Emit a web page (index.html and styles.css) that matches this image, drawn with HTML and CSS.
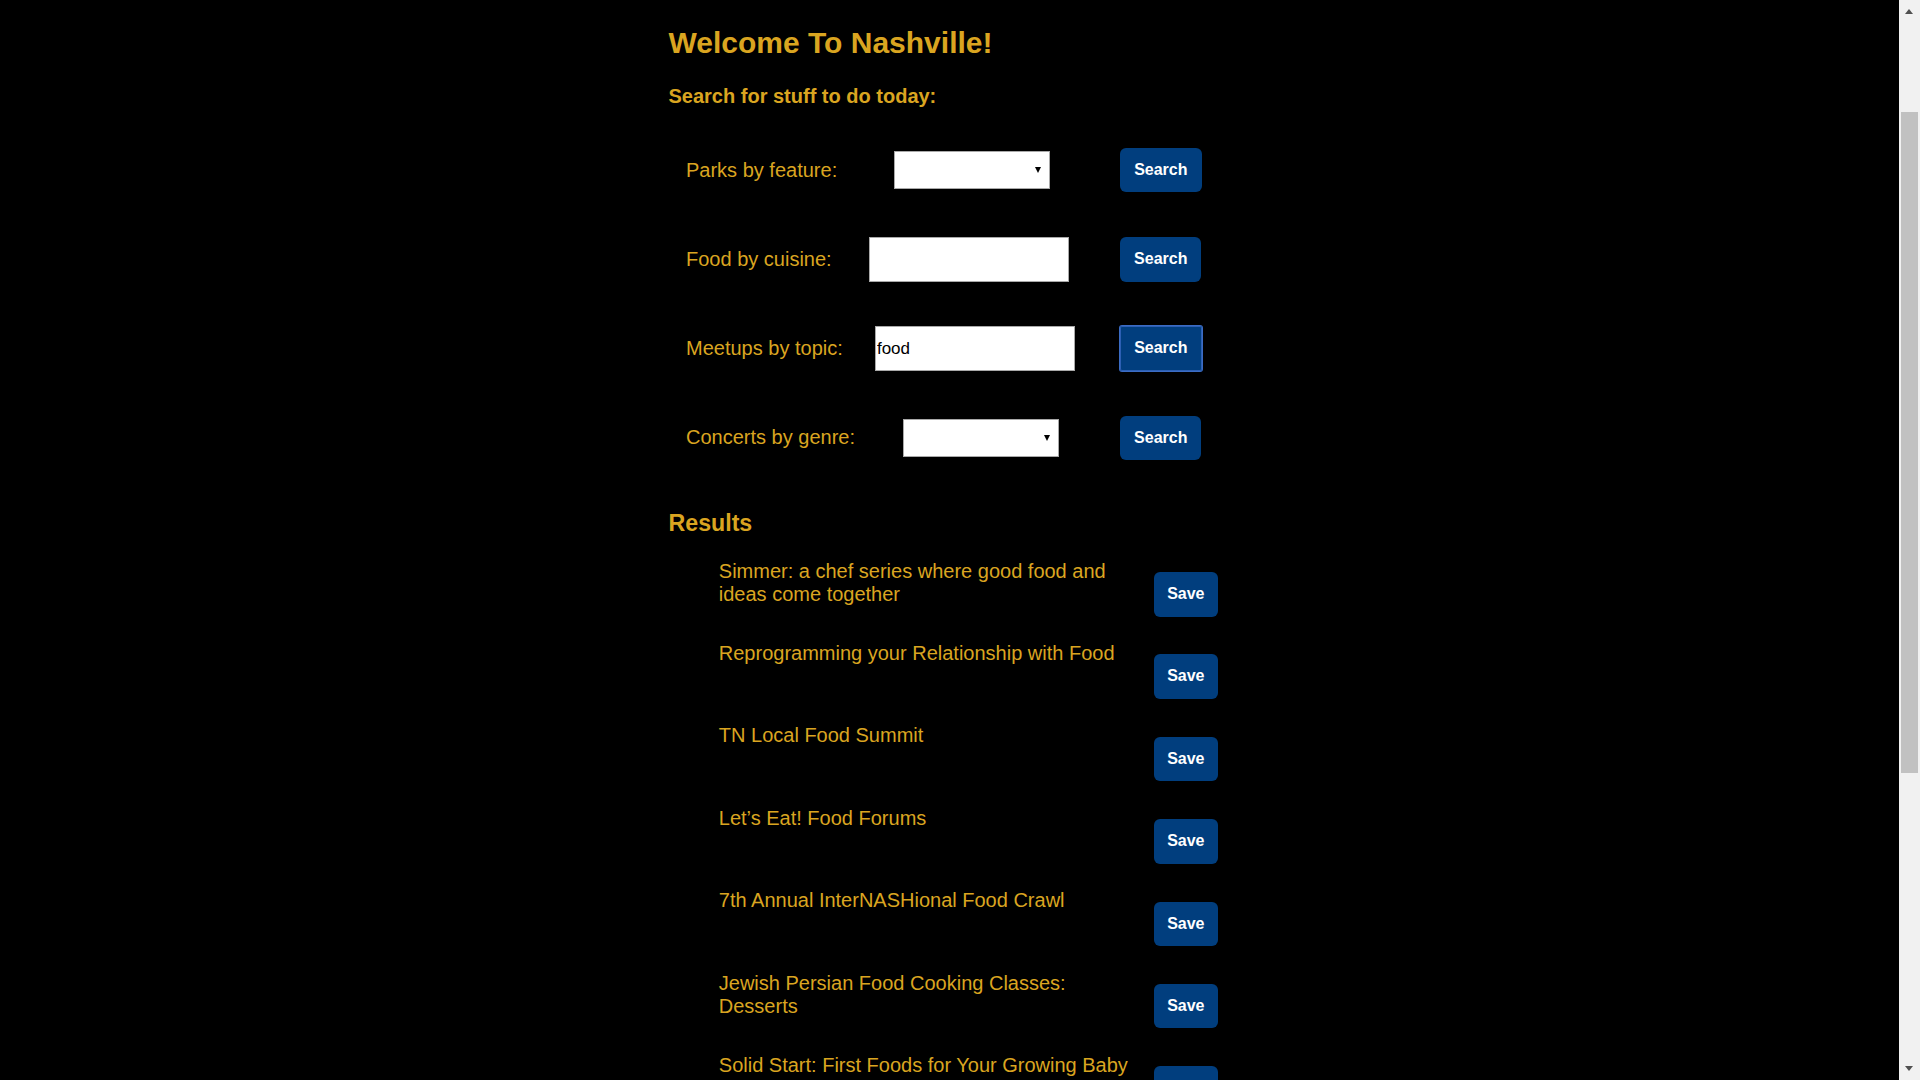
FILE: index.html
```html
<!DOCTYPE html>
<html lang="en">
<head>
<meta charset="utf-8">
<title>Welcome To Nashville!</title>
<link rel="stylesheet" href="styles.css">
</head>
<body>
<main class="page">
  <h1 class="title">Welcome To Nashville!</h1>
  <h3 class="subtitle">Search for stuff to do today:</h3>

  <form class="search-row">
    <label class="search-label">Parks by feature:</label>
    <div class="select-wrap control"><select class="select"></select></div>
    <button type="button" class="btn">Search</button>
  </form>

  <form class="search-row">
    <label class="search-label">Food by cuisine:</label>
    <input class="text-input control" type="text" value="">
    <button type="button" class="btn">Search</button>
  </form>

  <form class="search-row">
    <label class="search-label">Meetups by topic:</label>
    <input class="text-input control" type="text" value="food">
    <button type="button" class="btn is-focused">Search</button>
  </form>

  <form class="search-row">
    <label class="search-label">Concerts by genre:</label>
    <div class="select-wrap control"><select class="select"></select></div>
    <button type="button" class="btn">Search</button>
  </form>

  <h2 class="results-title">Results</h2>
  <ul class="results">
    <li class="result"><span class="result-name">Simmer: a chef series where good food and ideas come together</span><button type="button" class="btn btn-save">Save</button></li>
    <li class="result"><span class="result-name">Reprogramming your Relationship with Food</span><button type="button" class="btn btn-save">Save</button></li>
    <li class="result"><span class="result-name">TN Local Food Summit</span><button type="button" class="btn btn-save">Save</button></li>
    <li class="result"><span class="result-name">Let’s Eat! Food Forums</span><button type="button" class="btn btn-save">Save</button></li>
    <li class="result"><span class="result-name">7th Annual InterNASHional Food Crawl</span><button type="button" class="btn btn-save">Save</button></li>
    <li class="result"><span class="result-name">Jewish Persian Food Cooking Classes: Desserts</span><button type="button" class="btn btn-save">Save</button></li>
    <li class="result"><span class="result-name">Solid Start: First Foods for Your Growing Baby</span><button type="button" class="btn btn-save">Save</button></li>
  </ul>
</main>

<div class="scrollbar" aria-hidden="true">
  <span class="scroll-arrow scroll-arrow-up"></span>
  <span class="scroll-thumb"></span>
  <span class="scroll-arrow scroll-arrow-down"></span>
</div>
</body>
</html>
```
FILE: styles.css
```css
html {
  background: #000;
  overflow: hidden;
}
body {
  margin: 0 21px 0 0;
  background: #000;
  color: #daa520;
  font-family: "Liberation Sans", Arial, sans-serif;
}

.page {
  box-sizing: border-box;
  width: 562px;
  margin: 0 auto;
  padding-top: 26.2px;
}

.title {
  margin: 0;
  font-size: 30px;
  line-height: 34px;
  font-weight: bold;
}

.subtitle {
  margin: 24.9px 0 0;
  font-size: 20px;
  line-height: 23px;
  font-weight: bold;
}

.search-row {
  display: flex;
  align-items: center;
  justify-content: space-between;
  width: 515.5px;
  height: 44.5px;
  margin: 0 0 44.8px 17.5px;
}
.subtitle + .search-row {
  margin-top: 39.7px;
}

.search-label {
  font-size: 20px;
  line-height: 23px;
}

.control {
  margin-right: 13px;
}

.select-wrap {
  position: relative;
  width: 156px;
  height: 37.5px;
}
.select-wrap::after {
  content: "";
  position: absolute;
  right: 9px;
  top: 16px;
  border-left: 3.5px solid transparent;
  border-right: 3.5px solid transparent;
  border-top: 6px solid #000;
  pointer-events: none;
}
.select {
  -webkit-appearance: none;
  appearance: none;
  box-sizing: border-box;
  display: block;
  width: 100%;
  height: 100%;
  margin: 0;
  border: 1px solid #a9a9a9;
  border-radius: 0;
  background: #fff;
  font-family: "Liberation Sans", Arial, sans-serif;
  font-size: 16px;
}

.text-input {
  box-sizing: border-box;
  width: 200px;
  height: 44.5px;
  margin-top: 0;
  margin-bottom: 0;
  margin-left: 0;
  padding: 0 2px 0 1px;
  border: 1px solid #a9a9a9;
  border-radius: 0;
  background: #fff;
  color: #000;
  font-family: "Liberation Sans", Arial, sans-serif;
  font-size: 17px;
}

.btn {
  margin: 0;
  padding: 13px 14px;
  border: none;
  border-radius: 6px;
  background: #013e7e;
  color: #fff;
  font-family: "Liberation Sans", Arial, sans-serif;
  font-size: 16px;
  line-height: 18.5px;
  font-weight: bold;
  cursor: pointer;
}
.btn.is-focused {
  border-radius: 2px;
  box-shadow: 0 0 0 1px #3b6cc4, inset 0 0 0 1px #2d5fb3;
}

.results-title {
  margin: 49.8px 0 0;
  font-size: 23.2px;
  line-height: 27px;
  font-weight: bold;
}

.results {
  list-style: none;
  width: 498.9px;
  margin: 22.7px 0 0;
  padding: 0 0 0 50.3px;
}

.result {
  display: flex;
  justify-content: space-between;
  align-items: flex-start;
  margin-bottom: 25.5px;
}

.result-name {
  width: 420px;
  font-size: 20px;
  line-height: 23px;
}

.btn-save {
  margin-top: 12.4px;
  padding: 13px 13.2px;
}

/* window scrollbar (page is scrolled part-way down) */
.scrollbar {
  position: fixed;
  top: 0;
  right: 0;
  width: 21px;
  height: 100vh;
  background: #f1f1f1;
}
.scroll-thumb {
  position: absolute;
  left: 2px;
  top: 112px;
  width: 17px;
  height: 661px;
  background: #c1c1c1;
}
.scroll-arrow {
  position: absolute;
  left: 6px;
  width: 0;
  height: 0;
  border-left: 4.5px solid transparent;
  border-right: 4.5px solid transparent;
}
.scroll-arrow-up {
  top: 9px;
  border-bottom: 5px solid #505050;
}
.scroll-arrow-down {
  bottom: 9px;
  border-top: 5px solid #505050;
}
```
